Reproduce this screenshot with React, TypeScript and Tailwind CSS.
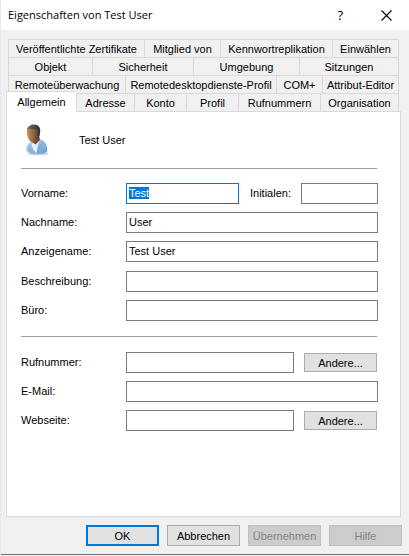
import { useEffect, useRef, type ReactNode } from "react";

const UI_FONT = "font-['Liberation_Sans',Arial,sans-serif]";

function TabRow({ columns, tabs }: { columns: string; tabs: string[] }) {
  return (
    <div className={`grid h-[18px] border-r border-[#d9d9d9] ${columns}`}>
      {tabs.map((tab) => (
        <button
          key={tab}
          type="button"
          role="tab"
          aria-selected={false}
          className="overflow-hidden border-t border-l border-[#d9d9d9] text-center leading-[18px] whitespace-nowrap"
        >
          {tab}
        </button>
      ))}
    </div>
  );
}

function Row({ id, label, children }: { id: string; label: string; children: ReactNode }) {
  return (
    <div className="flex h-[21px] items-center">
      <label htmlFor={id} className="w-[105px] shrink-0 pb-[2px]">
        {label}
      </label>
      {children}
    </div>
  );
}

function Field({ id, value = "" }: { id: string; value?: string }) {
  return (
    <input
      id={id}
      type="text"
      defaultValue={value}
      className="h-[21px] w-full min-w-0 flex-1 border border-[#7a7a7a] bg-white px-[2px] pb-[2px] outline-none focus:border-[#0078d7]"
    />
  );
}

function OtherButton() {
  return (
    <button type="button" className="ml-2.5 mr-px h-[19px] w-[73px] shrink-0 border border-[#adadad] bg-[#e1e1e1]">
      Andere...
    </button>
  );
}

function UserIcon() {
  return (
    <svg width="24" height="33" viewBox="0 0 24 33" aria-hidden="true">
      <defs>
        <linearGradient id="skin" x1="0" x2="1">
          <stop offset="0" stopColor="#c39463" />
          <stop offset="0.5" stopColor="#936440" />
          <stop offset="1" stopColor="#513527" />
        </linearGradient>
        <linearGradient id="shirt" x1="0" y1="0" x2="1" y2="1">
          <stop offset="0" stopColor="#b9dcf5" />
          <stop offset="0.6" stopColor="#83b3df" />
          <stop offset="1" stopColor="#6b98c8" />
        </linearGradient>
        <linearGradient id="hair" x1="0" x2="1">
          <stop offset="0" stopColor="#77736d" />
          <stop offset="0.6" stopColor="#464646" />
          <stop offset="1" stopColor="#303030" />
        </linearGradient>
      </defs>
      <ellipse cx="13" cy="29.500" rx="10.5" ry="1.8" fill="#c5cbd0" />
      <path d="M1.500 27C1 21 3 18.500 8 17.500L16 15.500C20 17 22 20 22.500 27C19 31 6 31 1.500 27Z" fill="url(#shirt)" />
      <path d="M6.500 19.500L9 16.500L15 15.500L13 20L11.500 29.500L8 25Z" fill="#e5f2fb" />
      <path d="M7.500 15L14 11L15 16L10.500 20.500L7 18Z" fill="#74482c" />
      <path d="M2 8C1.500 4 4 1.500 8.500 1.500C14 1.500 15 6 14.500 10C14 15 11.500 18.500 7.500 18.500C4 17.500 2 13 2 8Z" fill="url(#skin)" />
      <path d="M2 5.500C2.500 2.500 5.500 .5 9 .5C14.500 .5 16.500 4.500 14.500 12L12.500 12.500C13 10 12.500 7 11.500 5.500C8.500 5.500 5 4.500 2 5.500Z" fill="url(#hair)" />
      <path d="M17 19Q14 23 12.500 29M4.500 22Q5 25 6 28" fill="none" stroke="#6897c5" strokeWidth=".6" />
    </svg>
  );
}

export default function App() {
  const first = useRef<HTMLInputElement>(null);

  useEffect(() => {
    first.current?.focus();
    first.current?.select();
  }, []);

  return (
    <main className={`flex min-h-screen w-full flex-col border-l border-[#e8e8e8] bg-[#f0f0f0] text-[11px] leading-[14px] text-black ${UI_FONT}`}>
      <header className="flex h-[30px] items-center bg-white pr-[17px] pl-[7px]">
        <h1 className="flex-1 font-['Open_Sans','Noto_Sans',sans-serif] text-[11px]">Eigenschaften von Test User</h1>
        <button type="button" aria-label="Hilfe" className="mr-[38px] font-['Open_Sans',sans-serif] text-[13px]">
          ?
        </button>
        <button type="button" aria-label="Schließen">
          <svg width="11" height="11" viewBox="0 0 11 11" aria-hidden="true">
            <path d="M.5.5l10 10M10.500.5l-10 10" stroke="#000" strokeWidth="1.100" fill="none" />
          </svg>
        </button>
      </header>

      <form className="flex flex-1 flex-col pt-[9px] pr-[7px] pl-[5px]" onSubmit={(e) => e.preventDefault()}>
        <div role="tablist" className="mr-[3px] pl-[2px]">
          <TabRow
            columns="grid-cols-[136fr_76fr_112fr_66fr]"
            tabs={["Veröffentlichte Zertifikate", "Mitglied von", "Kennwortreplikation", "Einwählen"]}
          />
          <TabRow columns="grid-cols-[84fr_101fr_106fr_99fr]" tabs={["Objekt", "Sicherheit", "Umgebung", "Sitzungen"]} />
          <TabRow
            columns="grid-cols-[117fr_151fr_46fr_76fr]"
            tabs={["Remoteüberwachung", "Remotedesktopdienste-Profil", "COM+", "Attribut-Editor"]}
          />
          <div className="-ml-[2px] flex">
            <button
              type="button"
              role="tab"
              aria-selected={true}
              className="relative z-10 -mt-[2px] h-[21px] w-[70px] shrink-0 border-t border-l border-[#d9d9d9] bg-white"
            >
              Allgemein
            </button>
            <div className="flex-1">
              <TabRow
                columns="grid-cols-[58fr_52fr_52fr_82fr_78fr]"
                tabs={["Adresse", "Konto", "Profil", "Rufnummern", "Organisation"]}
              />
            </div>
          </div>
        </div>

        <section role="tabpanel" className="-mt-px mr-px flex-1 border border-[#d9d9d9] bg-white pr-[22px] pl-[14px]">
          <div className="flex items-center gap-[30px] pt-3 pl-1">
            <UserIcon />
            <p className="pb-[2px]">Test User</p>
          </div>
          <hr className="mt-[11px] mr-px border-[#a0a0a0]" />

          <div className="mt-[14px] flex flex-col gap-2">
            <Row id="vorname" label="Vorname:">
              <input
                id="vorname"
                ref={first}
                type="text"
                defaultValue="Test"
                className="h-[21px] w-0 min-w-0 flex-1 border border-[#0078d7] bg-white px-[2px] pb-[2px] outline-none selection:bg-[#0078d7] selection:text-white"
              />
              <label htmlFor="initialen" className="w-[62px] shrink-0 pb-[2px] pl-[11px]">
                Initialen:
              </label>
              <input
                id="initialen"
                type="text"
                className="h-[21px] w-[77px] shrink-0 border border-[#7a7a7a] bg-white px-[2px] pb-[2px] outline-none"
              />
            </Row>
            <Row id="nachname" label="Nachname:">
              <Field id="nachname" value="User" />
            </Row>
            <Row id="anzeigename" label="Anzeigename:">
              <Field id="anzeigename" value="Test User" />
            </Row>
          </div>
          <div className="mt-[9px] flex flex-col gap-2">
            <Row id="beschreibung" label="Beschreibung:">
              <Field id="beschreibung" />
            </Row>
            <Row id="buero" label="Büro:">
              <Field id="buero" />
            </Row>
          </div>

          <hr className="mt-[15px] mr-px border-[#a0a0a0]" />

          <div className="mt-[15px] flex flex-col gap-2">
            <Row id="rufnummer" label="Rufnummer:">
              <Field id="rufnummer" />
              <OtherButton />
            </Row>
            <Row id="email" label="E-Mail:">
              <Field id="email" />
            </Row>
            <Row id="webseite" label="Webseite:">
              <Field id="webseite" />
              <OtherButton />
            </Row>
          </div>
        </section>

        <footer className="flex justify-end gap-2 pt-2 pb-2">
          <button type="submit" className="h-[21px] w-[73px] border-2 border-[#0078d7] bg-[#e1e1e1]">
            OK
          </button>
          <button type="button" className="h-[21px] w-[73px] border border-[#adadad] bg-[#e1e1e1]">
            Abbrechen
          </button>
          <button type="button" disabled className="h-[21px] w-[73px] border border-[#bfbfbf] bg-[#cccccc] text-[#838383]">
            Übernehmen
          </button>
          <button type="button" disabled className="h-[21px] w-[73px] border border-[#bfbfbf] bg-[#cccccc] text-[#838383]">
            Hilfe
          </button>
        </footer>
      </form>
      <div className="h-[2px] border-t border-[#707070]" />
    </main>
  );
}
